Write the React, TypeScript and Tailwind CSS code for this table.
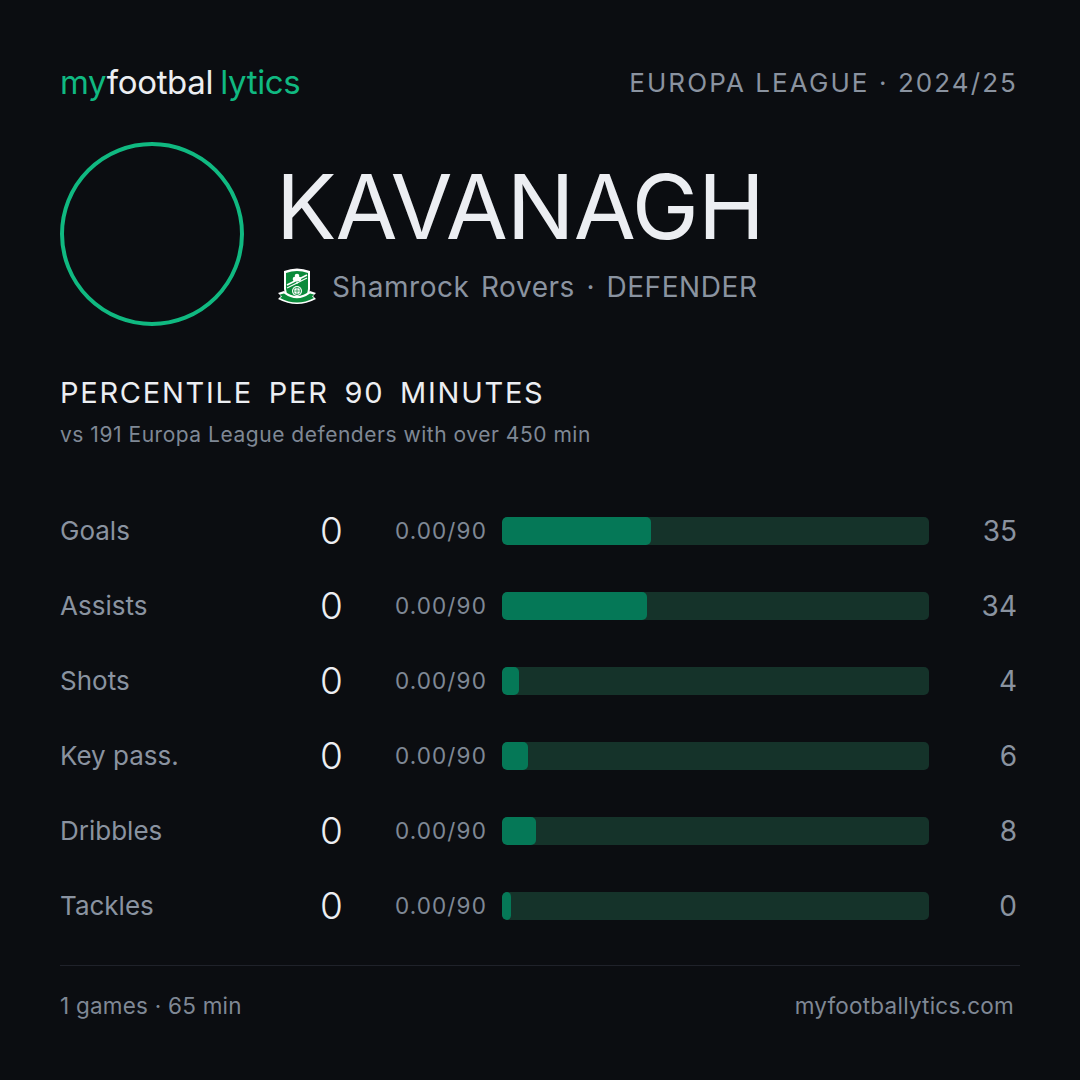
import React from "react";

const stats = [
  { label: "Goals", value: "0", per90: "0.00/90", pct: 35 },
  { label: "Assists", value: "0", per90: "0.00/90", pct: 34 },
  { label: "Shots", value: "0", per90: "0.00/90", pct: 4 },
  { label: "Key pass.", value: "0", per90: "0.00/90", pct: 6 },
  { label: "Dribbles", value: "0", per90: "0.00/90", pct: 8 },
  { label: "Tackles", value: "0", per90: "0.00/90", pct: 0 },
];

// Shamrock Rovers crest, simplified
function Crest() {
  return (
    <svg width="42" height="40" viewBox="0 0 42 40">
      <path d="M8 4 Q21 -1 34 4 L34 22 Q34 32 21 37 Q8 32 8 22 Z" fill="#ffffff" />
      <path d="M10 6 Q21 2 32 6 L32 22 Q32 30 21 35 Q10 30 10 22 Z" fill="#0a8a3a" />
      <path d="M11 18 L31 8" stroke="#ffffff" strokeWidth="1.6" />
      <path d="M11 21 L31 11" stroke="#ffffff" strokeWidth="1.2" />
      <circle cx="19" cy="12" r="2.3" fill="#ffffff" />
      <circle cx="23" cy="12" r="2.3" fill="#ffffff" />
      <circle cx="21" cy="9" r="2.3" fill="#ffffff" />
      <path d="M21 12 L21 17" stroke="#ffffff" strokeWidth="1" />
      <circle cx="21" cy="24" r="5" fill="#ffffff" />
      <circle cx="21" cy="24" r="3.6" fill="none" stroke="#0a8a3a" strokeWidth="0.8" />
      <path d="M17.5 24 H24.5 M21 20.5 V27.5" stroke="#0a8a3a" strokeWidth="0.7" />
      <path d="M2 26 L8 24 Q21 34 34 24 L40 26 L37 29 L40 32 Q21 42 2 32 L5 29 Z" fill="#ffffff" />
      <path d="M4 27.5 L8 26.5 Q21 36 34 26.5 L38 27.5 L36 29.5 L38 31 Q21 40 4 31 L6 29.5 Z" fill="#0a8a3a" />
    </svg>
  );
}

function StatRow({ label, value, per90, pct }: (typeof stats)[number]) {
  return (
    <div className="flex items-center h-[75px]">
      <div className="w-[260px] shrink-0 text-[26px] text-[#8a93a0]">{label}</div>
      <div className="w-[60px] shrink-0 text-[37px] font-light text-[#eceef2]">{value}</div>
      <div className="w-[107px] shrink-0 text-right text-[22.5px] tracking-[0.05em] text-[#7f8895]">{per90}</div>
      <div className="ml-[15px] w-[427px] shrink-0 h-[28px] rounded-[5px] bg-[#15332a] overflow-hidden">
        <div
          className="h-full rounded-[5px] bg-[#057857]"
          style={{ width: `${Math.max(pct, 2)}%` }}
        />
      </div>
      <div className="flex-1 text-right text-[28px] text-[#8a93a0] pr-[3px]">{pct}</div>
    </div>
  );
}

export default function App() {
  return (
    <div
      className="w-[1080px] h-[1080px] bg-[#0b0d11] px-[60px] pt-[62px] flex flex-col"
      style={{ fontFamily: "Inter, 'Noto Sans', sans-serif" }}
    >
      {/* Header */}
      <div className="flex items-center justify-between h-[40px]">
        <div className="text-[33px] tracking-[-0.01em] leading-none">
          <span className="text-[#10b981]">my</span>
          <span className="text-[#eceef2]">footbal</span>
          <span className="text-[#10b981] ml-[7px]">lytics</span>
        </div>
        <div className="text-[26px] tracking-[0.08em] text-[#8a93a0] pr-[2px]">
          EUROPA LEAGUE · 2024/25
        </div>
      </div>

      {/* Player */}
      <div className="flex items-center mt-[40px]">
        <div className="w-[184px] h-[184px] rounded-full border-[4px] border-[#10b981] shrink-0" />
        <div className="ml-[32px] flex flex-col gap-[15px]">
          <div className="text-[90px] leading-none text-[#eceef2] tracking-[-0.01em]">KAVANAGH</div>
          <div className="flex items-center gap-[14px] h-[40px]">
            <Crest />
            <div className="text-[28px] text-[#8a93a0] tracking-[0.02em] [word-spacing:3px]">
              Shamrock Rovers · DEFENDER
            </div>
          </div>
        </div>
      </div>

      {/* Section title */}
      <div className="mt-[52px] text-[29px] leading-none tracking-[0.06em] [word-spacing:6px] text-[#eceef2]">
        PERCENTILE PER 90 MINUTES
      </div>
      <div className="mt-[17px] text-[21px] leading-none tracking-[0.025em] text-[#7f8895]">
        vs 191 Europa League defenders with over 450 min
      </div>

      {/* Stats */}
      <div className="mt-[48px] flex flex-col">
        {stats.map((s) => (
          <StatRow key={s.label} {...s} />
        ))}
      </div>

      {/* Footer */}
      <div className="mt-[22px] border-t border-[#1f222a]" />
      <div className="flex justify-between items-center mt-[23px] text-[22.5px] text-[#7f8895] tracking-[0.01em]">
        <div>1 games · 65 min</div>
        <div className="pr-[6px]">myfootballytics.com</div>
      </div>
    </div>
  );
}
